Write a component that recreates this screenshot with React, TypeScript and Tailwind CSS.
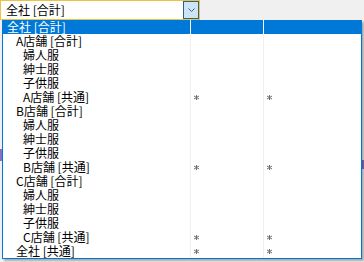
import React from 'react';

type Row = { label: string; level: 0 | 1 | 2; star?: boolean };

const rows: Row[] = [
  { label: '全社 [合計]', level: 0 },
  { label: 'A店舗 [合計]', level: 1 },
  { label: '婦人服', level: 2 },
  { label: '紳士服', level: 2 },
  { label: '子供服', level: 2 },
  { label: 'A店舗 [共通]', level: 2, star: true },
  { label: 'B店舗 [合計]', level: 1 },
  { label: '婦人服', level: 2 },
  { label: '紳士服', level: 2 },
  { label: '子供服', level: 2 },
  { label: 'B店舗 [共通]', level: 2, star: true },
  { label: 'C店舗 [合計]', level: 1 },
  { label: '婦人服', level: 2 },
  { label: '紳士服', level: 2 },
  { label: '子供服', level: 2 },
  { label: 'C店舗 [共通]', level: 2, star: true },
  { label: '全社 [共通]', level: 1, star: true },
];

const indent = ['pl-[4px]', 'pl-[13px]', 'pl-[20px]'];

function Star() {
  return (
    <svg width="5" height="5" viewBox="0 0 5 5" className="block">
      <path d="M2.5 0V5M0 1L5 4M0 4L5 1" stroke="#707070" strokeWidth="1" />
    </svg>
  );
}

export default function App() {
  return (
    <div
      className="relative w-[364px] h-[262px] overflow-hidden bg-[#f0f0f0] text-[12px] text-black"
      style={{ fontFamily: '"Noto Sans CJK JP", "Noto Sans", sans-serif' }}
    >
      {/* bits of the form behind the popup */}
      <div className="absolute left-0 top-[149px] w-[2px] h-[12px] bg-[#8a6fc7]" />
      <div className="absolute right-0 top-[160px] w-[2px] h-[9px] bg-[#8a6fc7]" />

      {/* Combo box */}
      <div className="flex w-[200px] h-[20px] border border-[#f0c040] bg-white">
        <div className="flex-1 pl-[5px] leading-[18px]">全社 [合計]</div>
        <div className="w-[16px] h-[18px] border border-[#2c628b] bg-[#cce4f7] flex items-center justify-center">
          <svg width="7" height="4" viewBox="0 0 7 4">
            <path d="M0.5 0.5L3.5 3.5L6.5 0.5" fill="none" stroke="#606060" strokeWidth="1" />
          </svg>
        </div>
      </div>

      {/* Dropdown list */}
      <div className="relative ml-[2px] w-[360px] border border-t-0 border-[#0078d7] bg-white shadow-[2px_2px_2px_rgba(0,0,0,0.3)]">
        {rows.map((r, i) => {
          const sel = i === 0;
          const sep = sel ? 'border-white' : 'border-[#f0f0f0]';
          return (
            <div
              key={i}
              className={`grid grid-cols-[188px_73px_97px] h-[14px] leading-[14px] ${sel ? 'bg-[#0078d7] text-white' : ''}`}
            >
              <div className={`border-r ${sep} ${indent[r.level]} whitespace-nowrap`}>{r.label}</div>
              <div className={`border-r ${sep} pl-[3px] flex items-center`}>{r.star && <Star />}</div>
              <div className="pl-[3px] flex items-center">{r.star && <Star />}</div>
            </div>
          );
        })}
      </div>
    </div>
  );
}
